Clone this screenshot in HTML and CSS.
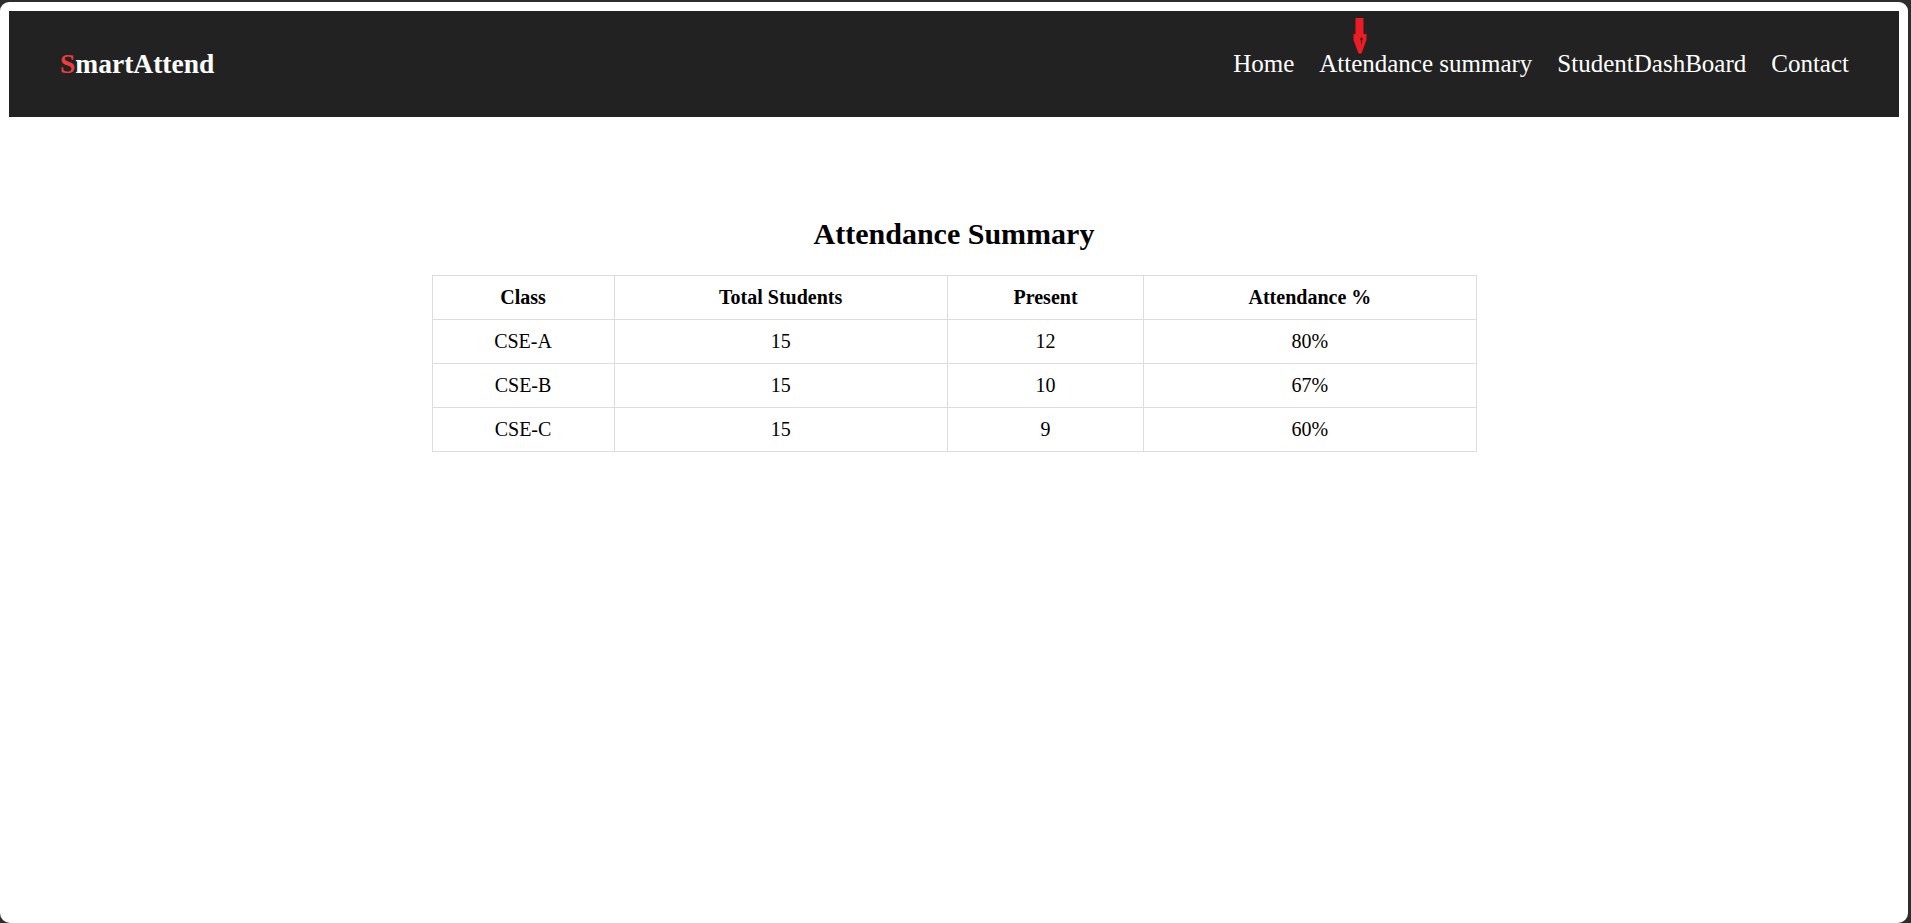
FILE: index.html
```html
<!DOCTYPE html>
<html lang="en">
<head>
<meta charset="utf-8">
<title>SmartAttend - Attendance Summary</title>
<link rel="stylesheet" href="styles.css">
</head>
<body>
<div class="window">
  <header class="navbar">
    <div class="logo"><span class="logo-s">S</span>martAttend</div>
    <nav class="nav-links">
      <a href="#" class="nav-link">Home</a>
      <a href="#" class="nav-link">Attendance summary</a>
      <a href="#" class="nav-link">StudentDashBoard</a>
      <a href="#" class="nav-link">Contact</a>
    </nav>
    <svg class="pointer-arrow" width="15" height="38" viewBox="0 0 15 38" aria-hidden="true">
      <rect x="2.5" y="0" width="8" height="19" fill="#ec1c24"/>
      <path d="M0.5 16 L13.5 16 L13.5 22 L8.5 35.5 L5.5 35.5 L0.5 22 Z" fill="#ec1c24"/>
      <path d="M8.5 19.5 V25.5 M7 21 H10" stroke="#1a1a1a" stroke-width="1"/>
    </svg>
  </header>

  <main class="content">
    <h2 class="page-title">Attendance Summary</h2>
    <table class="summary-table">
      <thead>
        <tr>
          <th>Class</th>
          <th>Total Students</th>
          <th>Present</th>
          <th>Attendance %</th>
        </tr>
      </thead>
      <tbody>
        <tr><td>CSE-A</td><td>15</td><td>12</td><td>80%</td></tr>
        <tr><td>CSE-B</td><td>15</td><td>10</td><td>67%</td></tr>
        <tr><td>CSE-C</td><td>15</td><td>9</td><td>60%</td></tr>
      </tbody>
    </table>
  </main>
</div>
</body>
</html>
```
FILE: styles.css
```css
html {
  background: #2d2d2d;
  height: 100%;
}

body {
  margin: 0;
  height: 100%;
  font-family: "Liberation Serif", "Times New Roman", serif;
  color: #000;
}

.window {
  box-sizing: border-box;
  margin: 2px 3px 0 0;
  height: calc(100% - 2px);
  background: #fff;
  border-radius: 9px 9px 10px 10px;
  padding: 9px 9px 0 9px;
}

.navbar {
  position: relative;
  box-sizing: border-box;
  height: 106px;
  background: #222;
  display: flex;
  align-items: center;
  justify-content: space-between;
  padding: 0 50px 0 51px;
}

.logo {
  font-size: 27.5px;
  font-weight: bold;
  color: #fff;
}

.logo-s {
  color: #f23c3c;
}

.nav-links {
  display: flex;
  gap: 25px;
}

.nav-link {
  color: #fff;
  text-decoration: none;
  font-size: 25px;
}

.pointer-arrow {
  position: absolute;
  left: 1344px;
  top: 7px;
}

.content {
  padding-top: 75px;
  display: flex;
  flex-direction: column;
  align-items: center;
}

.page-title {
  font-size: 30px;
  font-weight: bold;
  margin: 25px 0 24px 0;
}

.summary-table {
  width: 1045px;
  border-collapse: collapse;
  font-size: 20px;
}

.summary-table th,
.summary-table td {
  border: 1px solid #ddd;
  padding: 10px;
  text-align: center;
}

.summary-table th {
  font-weight: bold;
}
```
